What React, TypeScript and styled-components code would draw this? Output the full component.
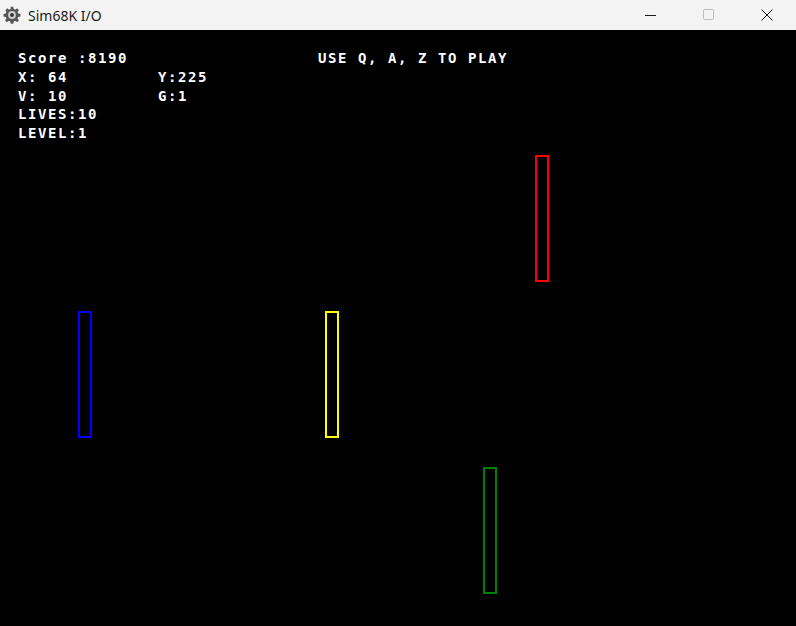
import React from "react";
import styled, { createGlobalStyle } from "styled-components";

const Global = createGlobalStyle`
  html, body { margin: 0; padding: 0; background: #000; }
  body { width: 796px; height: 626px; overflow: hidden; }
  #root { width: 796px; height: 626px; }
`;

const Window = styled.div`
  width: 796px;
  height: 626px;
  display: flex;
  flex-direction: column;
  background: #000;
`;

const TitleBar = styled.div`
  height: 30px;
  flex: 0 0 30px;
  background: #f3f3f3;
  display: flex;
  align-items: center;
`;

const AppIcon = styled.div`
  width: 18px;
  height: 18px;
  margin-left: 3px;
  margin-right: 7px;
  display: flex;
  align-items: center;
  justify-content: center;
`;

const Title = styled.div`
  font-family: "Noto Sans", "Open Sans", sans-serif;
  font-size: 14px;
  color: #1a1a1a;
  flex: 1;
  padding-top: 1px;
`;

const Controls = styled.div`
  display: flex;
  height: 30px;
`;

const CtlButton = styled.div`
  width: 58px;
  height: 30px;
  display: flex;
  align-items: center;
  justify-content: center;
`;

const Screen = styled.div`
  flex: 1;
  position: relative;
  background: #000;
  overflow: hidden;
`;

const Hud = styled.div`
  padding: 19px 0 0 18px;
  font-family: "DejaVu Sans Mono", "Liberation Mono", monospace;
  font-weight: bold;
  font-size: 14px;
  letter-spacing: 1.57px;
  line-height: 18.75px;
  color: #ffffff;
`;

const Line = styled.div`
  white-space: pre;
  height: 18.75px;
`;

const Bar = styled.div<{ $color: string; $x: number; $y: number }>`
  position: absolute;
  left: ${(p) => p.$x}px;
  top: ${(p) => p.$y}px;
  width: 14px;
  height: 127px;
  box-sizing: border-box;
  border: 2px solid ${(p) => p.$color};
`;

const Gear = () => (
  <svg width="18" height="18" viewBox="0 0 24 24">
    <path
      fill="#555"
      d="M10.3 1h3.4l.5 3a8 8 0 0 1 2.1.9l2.5-1.8 2.4 2.4-1.8 2.5a8 8 0 0 1 .9 2.1l3 .5v3.4l-3 .5a8 8 0 0 1-.9 2.1l1.8 2.5-2.4 2.4-2.5-1.8a8 8 0 0 1-2.1.9l-.5 3h-3.4l-.5-3a8 8 0 0 1-2.1-.9l-2.5 1.8-2.4-2.4 1.8-2.5a8 8 0 0 1-.9-2.1l-3-.5v-3.4l3-.5a8 8 0 0 1 .9-2.1L3.3 5.5l2.4-2.4 2.5 1.8a8 8 0 0 1 2.1-.9z"
    />
    <circle cx="12" cy="12" r="5.2" fill="#d0d0d0" />
    <circle cx="12" cy="12" r="2.6" fill="#333" />
  </svg>
);

const hudLines = [
  "Score :8190                   USE Q, A, Z TO PLAY",
  "X: 64         Y:225",
  "V: 10         G:1",
  "LIVES:10",
  "LEVEL:1",
];

const bars = [
  { color: "#ff0000", x: 535, y: 125 },
  { color: "#0000ff", x: 78, y: 281 },
  { color: "#ffff00", x: 325, y: 281 },
  { color: "#008000", x: 483, y: 437 },
];

export default function App() {
  return (
    <>
      <Global />
      <Window>
        <TitleBar>
          <AppIcon>
            <Gear />
          </AppIcon>
          <Title>Sim68K I/O</Title>
          <Controls>
            <CtlButton>
              <svg width="12" height="12" viewBox="0 0 12 12">
                <line x1="0" y1="6.5" x2="11" y2="6.5" stroke="#1a1a1a" strokeWidth="1" />
              </svg>
            </CtlButton>
            <CtlButton>
              <svg width="12" height="12" viewBox="0 0 12 12">
                <rect x="0.5" y="0.5" width="10" height="10" rx="1" fill="none" stroke="#bdbdbd" strokeWidth="1" />
              </svg>
            </CtlButton>
            <CtlButton>
              <svg width="12" height="12" viewBox="0 0 12 12">
                <path d="M0.5 0.5 L11.5 11.5 M11.5 0.5 L0.5 11.5" stroke="#1a1a1a" strokeWidth="1" />
              </svg>
            </CtlButton>
          </Controls>
        </TitleBar>
        <Screen>
          <Hud>
            {hudLines.map((l, i) => (
              <Line key={i}>{l}</Line>
            ))}
          </Hud>
          {bars.map((b, i) => (
            <Bar key={i} $color={b.color} $x={b.x} $y={b.y} />
          ))}
        </Screen>
      </Window>
    </>
  );
}
